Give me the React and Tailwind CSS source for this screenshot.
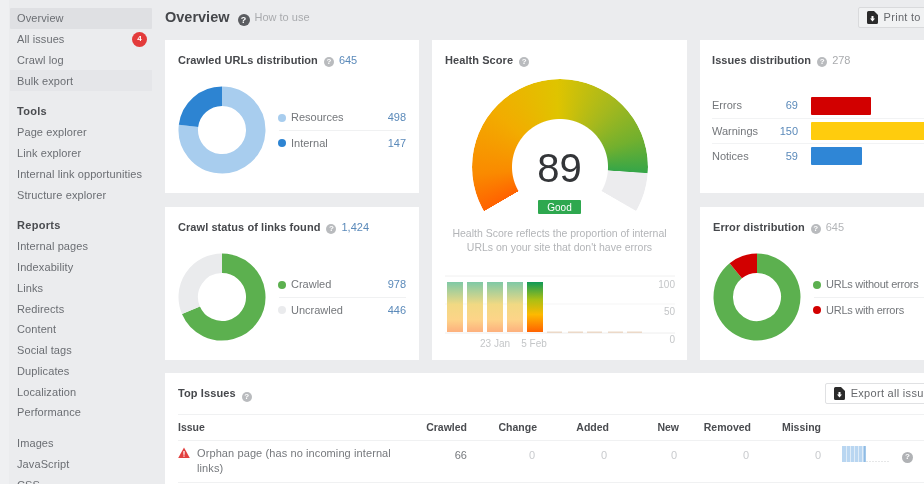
// App.jsx
import React from 'react';

const sans = { fontFamily: '"Liberation Sans", Arial, sans-serif' };

function NavItem({ label, className = '', children }) {
    return (
        <div className={`h-[20.8px] flex items-center justify-between pl-[7px] pr-[5px] text-[11px] tracking-[0.1px] text-[#6b6e73] ${className}`}>
            <span>{label}</span>
            {children}
        </div>
    );
}

function NavTitle({ label }) {
    return <div className="h-[20.8px] flex items-center pl-[7px] text-[11px] font-bold tracking-[0.3px] text-[#4a4c50]">{label}</div>;
}

function Help({ dark }) {
    return (
        <span className={`inline-flex items-center justify-center rounded-full font-bold text-white shrink-0 ${dark ? 'w-[12px] h-[12px] text-[9px] bg-[#5a5c60]' : 'w-[10px] h-[10px] text-[8px] bg-[#b9bbbe]'}`}>?</span>
    );
}

function CardTitle({ title, count, countClass = 'text-[#5b8aba]' }) {
    return (
        <div className="flex items-center h-[14px] text-[11px]">
            <span className="font-bold tracking-[0.07px] text-[#46484c]">{title}</span>
            <span className="ml-[6px]"><Help /></span>
            {count && <span className={`ml-[5px] ${countClass}`}>{count}</span>}
        </div>
    );
}

function FileIcon() {
    return (
        <svg width="11" height="13" viewBox="0 0 11 13" className="shrink-0">
            <path d="M1.500 0H7l4 4v7.500A1.500 1.500 0 0 1 9.500 13h-8A1.500 1.500 0 0 1 0 11.500v-10A1.500 1.500 0 0 1 1.500 0z" fill="#2b2b2b" />
            <path d="M4.500 5h2v2.500H8L5.500 10.500 3 7.500h1.500z" fill="#fff" />
        </svg>
    );
}

function Donut({ segments }) {
    // segments: [color, fromDeg, toDeg], clockwise from 12 o'clock
    const r = 33.75;
    const pt = (deg) => {
        const a = (deg - 90) * Math.PI / 180;
        return `${44 + r * Math.cos(a)} ${44 + r * Math.sin(a)}`;
    };
    return (
        <svg width="88" height="88" viewBox="0 0 88 88" className="shrink-0">
            {segments.map(([color, from, to]) => (
                <path key={color} d={`M${pt(from)} A${r} ${r} 0 ${to - from > 180 ? 1 : 0} 1 ${pt(to)}`} fill="none" stroke={color} strokeWidth="19.5" />
            ))}
        </svg>
    );
}

function Legend({ rows, labelClass = '' }) {
    return (
        <div className="w-[127px] ml-[13px] text-[11px]">
            {rows.map((row, i) => (
                <div key={row.label} className={`h-[25px] flex items-center ${i > 0 ? 'border-t border-[#f0f1f2]' : ''}`}>
                    <span className={`w-[8px] h-[8px] rounded-full ml-[-1px] mr-[5px] shrink-0 ${row.dot}`} />
                    <span className={`text-[#74777b] whitespace-nowrap ${labelClass}`}>{row.label}</span>
                    {row.value && <span className="ml-auto text-[#5b8aba]">{row.value}</span>}
                </div>
            ))}
        </div>
    );
}

function HistoryChart() {
    const bars = [447, 467, 487, 507];
    const small = [547, 568, 587, 608, 627];
    return (
        <svg width="240" height="76" viewBox="440 272 240 76" className="block" style={sans}>
            <defs>
                <linearGradient id="paleBar" x1="0" y1="0" x2="0" y2="1">
                    <stop offset="0" stopColor="#7fc9a6" />
                    <stop offset="0.45" stopColor="#f1d983" />
                    <stop offset="0.75" stopColor="#fdd488" />
                    <stop offset="1" stopColor="#fdb07d" />
                </linearGradient>
                <linearGradient id="fullBar" x1="0" y1="0" x2="0" y2="1">
                    <stop offset="0" stopColor="#0f9a58" />
                    <stop offset="0.35" stopColor="#a9bf14" />
                    <stop offset="0.65" stopColor="#fdb900" />
                    <stop offset="1" stopColor="#ff6200" />
                </linearGradient>
            </defs>
            <line x1="445" x2="675" y1="276" y2="276" stroke="#f0f0f0" />
            <line x1="445" x2="675" y1="304" y2="304" stroke="#f5f5f5" />
            <line x1="445" x2="675" y1="333" y2="333" stroke="#eeeeee" />
            {bars.map((x) => <rect key={x} x={x} y="282" width="16" height="50" fill="url(#paleBar)" />)}
            <rect x="527" y="282" width="16" height="50" fill="url(#fullBar)" />
            {small.map((x) => <rect key={x} x={x} y="331.5" width="15" height="1.5" fill="#ecd9c8" />)}
            <g fontSize="10" fill="#c4c6c8">
                <text x="675" y="288" textAnchor="end">100</text>
                <text x="675" y="315" textAnchor="end">50</text>
                <text x="675" y="343" textAnchor="end">0</text>
                <text x="495" y="347" textAnchor="middle">23 Jan</text>
                <text x="534" y="347" textAnchor="middle">5 Feb</text>
            </g>
        </svg>
    );
}

const cell = 'text-right';
const tableCols = 'grid-cols-[229px_60px_70px_72px_70px_72px_70px_100px]';

function App() {
    return (
        <div className="w-screen h-screen overflow-hidden flex bg-[#ebecee] blur-[0.5px]" style={sans}>
            <div className="w-[9px] shrink-0 bg-[#eff0f2]" />
            <aside className="w-[156px] shrink-0 pt-[8px] pl-[1px] pr-[13px]">
                <NavItem label="Overview" className="bg-[#dfe0e3] rounded-[1px]" />
                <NavItem label="All issues">
                    <span className="w-[15px] h-[15px] rounded-full bg-[#e33b3b] text-white text-[8px] font-bold flex items-center justify-center">4</span>
                </NavItem>
                <NavItem label="Crawl log" />
                <NavItem label="Bulk export" className="bg-[#e5e6e9]" />
                <div className="h-[10px]" />
                <NavTitle label="Tools" />
                <NavItem label="Page explorer" />
                <NavItem label="Link explorer" />
                <NavItem label="Internal link opportunities" />
                <NavItem label="Structure explorer" />
                <div className="h-[10px]" />
                <NavTitle label="Reports" />
                <NavItem label="Internal pages" />
                <NavItem label="Indexability" />
                <NavItem label="Links" />
                <NavItem label="Redirects" />
                <NavItem label="Content" />
                <NavItem label="Social tags" />
                <NavItem label="Duplicates" />
                <NavItem label="Localization" />
                <NavItem label="Performance" />
                <div className="h-[10px]" />
                <NavItem label="Images" />
                <NavItem label="JavaScript" />
                <NavItem label="CSS" />
            </aside>

            <main className="w-[860px] shrink-0">
                <header className="h-[40px] flex items-center pb-[5px]">
                    <h1 className="text-[14.5px] font-bold text-[#45474b]">Overview</h1>
                    <span className="ml-[8px]"><Help dark /></span>
                    <span className="ml-[5px] text-[11px] text-[#a9abae]">How to use</span>
                    <button className="ml-[548px] h-[21px] pl-[8px] pr-[10px] flex items-center gap-[6px] bg-[#f1f2f3] border border-[#d9dadc] rounded-[2px] text-[11px] tracking-[0.3px] text-[#66686c] whitespace-nowrap">
                        <FileIcon />
                        Print to PDF
                    </button>
                </header>

                <div className="grid grid-cols-[254px_255px_320px] grid-rows-[153px_153px] gap-x-[13px] gap-y-[14px]">
                    <section className="bg-white pt-[13px] px-[13px]">
                        <CardTitle title="Crawled URLs distribution" count="645" />
                        <div className="flex items-center mt-[19px]">
                            <Donut segments={[['#a8cdee', 0, 277], ['#2d84d2', 277, 360]]} />
                            <Legend rows={[
                                { label: 'Resources', value: '498', dot: 'bg-[#a8cdee]' },
                                { label: 'Internal', value: '147', dot: 'bg-[#2d84d2]' },
                            ]} />
                        </div>
                    </section>

                    <section className="bg-white row-span-2 pt-[13px] flex flex-col items-center">
                        <div className="self-start pl-[13px]"><CardTitle title="Health Score" /></div>
                        <div className="relative mt-[12px] w-[176px] h-[136px] overflow-hidden">
                            {/* gauge ring: 240deg sweep, coloured to 89% */}
                            <div className="w-[176px] h-[176px] rounded-full bg-[conic-gradient(from_240deg,#ff6200_0deg,#fa8a00_25deg,#f2ac00_70deg,#dfc400_118deg,#a4b81e_160deg,#72b02e_190deg,#36a648_213.7deg,#ececee_214.3deg,#ececee_239.7deg,#ffffff_240.3deg,#ffffff_359.7deg,#ff6200_360deg)] [mask:radial-gradient(circle,transparent_47.5px,#000_48.5px)]" />
                            <div className="absolute left-0 right-0 top-[70px] flex flex-col items-center">
                                <span className="text-[40px] leading-[38px] text-[#333538]">89</span>
                                <span className="mt-[13px] w-[43px] h-[14px] rounded-[1px] bg-[#2ea84f] text-white text-[10px] flex items-center justify-center">Good</span>
                            </div>
                        </div>
                        <p className="mt-[11px] w-[230px] text-center text-[10.5px] leading-[14px] text-[#b3b5b8]">
                            Health Score reflects the proportion of internal URLs on your site that don't have errors
                        </p>
                        <div className="mt-[18px]"><HistoryChart /></div>
                    </section>

                    <section className="bg-white pt-[13px] px-[12px]">
                        <CardTitle title="Issues distribution" count="278" countClass="text-[#a9abae]" />
                        <div className="mt-[26px] text-[11px]">
                            {[
                                ['Errors', '69', 'w-[60px] bg-[#d20000]', ''],
                                ['Warnings', '150', 'w-[220px] bg-[#ffcc0d]', 'border-t border-[#f2f3f4]'],
                                ['Notices', '59', 'w-[51px] bg-[#2f86d6]', 'border-t border-[#f2f3f4]'],
                            ].map(([label, value, bar, line]) => (
                                <div key={label} className={`h-[25px] flex items-center ${line}`}>
                                    <span className="w-[60px] shrink-0 text-[#74777b]">{label}</span>
                                    <span className="w-[26px] shrink-0 text-right text-[#5b8aba]">{value}</span>
                                    <span className={`ml-[13px] h-[18px] shrink-0 rounded-[1px] ${bar}`} />
                                </div>
                            ))}
                        </div>
                    </section>

                    <section className="bg-white pt-[13px] px-[13px] col-start-1">
                        <CardTitle title="Crawl status of links found" count="1,424" />
                        <div className="flex items-center mt-[19px]">
                            <Donut segments={[['#5cb04f', 0, 247], ['#eaebed', 247, 360]]} />
                            <Legend rows={[
                                { label: 'Crawled', value: '978', dot: 'bg-[#5cb04f]' },
                                { label: 'Uncrawled', value: '446', dot: 'bg-[#eaebed]' },
                            ]} />
                        </div>
                    </section>

                    <section className="bg-white pt-[13px] px-[13px] col-start-3">
                        <CardTitle title="Error distribution" count="645" countClass="text-[#b3b5b8]" />
                        <div className="flex items-center mt-[19px]">
                            <Donut segments={[['#5cb04f', 0, 321], ['#d20000', 321, 360]]} />
                            <Legend labelClass="tracking-[-0.25px]" rows={[
                                { label: 'URLs without errors', dot: 'bg-[#5cb04f]' },
                                { label: 'URLs with errors', dot: 'bg-[#d20000]' },
                            ]} />
                        </div>
                    </section>
                </div>

                <section className="bg-white mt-[13px] h-[200px]">
                    <div className="h-[41px] flex items-center px-[13px]">
                        <span className="text-[11px] font-bold tracking-[0.1px] text-[#46484c]">Top Issues</span>
                        <span className="ml-[6px]"><Help /></span>
                        <button className="ml-[573px] h-[21px] pl-[8px] pr-[10px] flex items-center gap-[6px] bg-white border border-[#e0e1e3] rounded-[2px] text-[11px] tracking-[0.3px] text-[#66686c] whitespace-nowrap">
                            <FileIcon />
                            Export all issues
                        </button>
                    </div>
                    <div className={`ml-[13px] grid ${tableCols} h-[27px] items-center border-t border-b border-[#f0f1f2] text-[10.5px] font-bold text-[#4a4c50]`}>
                        <span>Issue</span>
                        <span className={cell}>Crawled</span>
                        <span className={cell}>Change</span>
                        <span className={cell}>Added</span>
                        <span className={cell}>New</span>
                        <span className={cell}>Removed</span>
                        <span className={cell}>Missing</span>
                        <span />
                    </div>
                    <div className={`ml-[13px] grid ${tableCols} h-[42px] border-b border-[#f0f1f2] text-[11px] text-[#c9cbce]`}>
                        <div className="flex pt-[5px]">
                            <svg width="12" height="11" viewBox="0 0 12 11" className="shrink-0 mt-[1px]">
                                <path d="M6 0.5L11.8 11H0.2z" fill="#e2403f" />
                                <rect x="5.4" y="4" width="1.2" height="3.8" fill="#fff" />
                                <rect x="5.4" y="8.5" width="1.2" height="1.2" fill="#fff" />
                            </svg>
                            <span className="ml-[7px] w-[205px] leading-[15px] tracking-[0.1px] text-[#76797d]">Orphan page (has no incoming internal links)</span>
                        </div>
                        <span className={`${cell} pt-[6px] text-[#76797d]`}>66</span>
                        <span className={`${cell} pt-[6px] pr-[2px]`}>0</span>
                        <span className={`${cell} pt-[6px] pr-[2px]`}>0</span>
                        <span className={`${cell} pt-[6px] pr-[2px]`}>0</span>
                        <span className={`${cell} pt-[6px] pr-[2px]`}>0</span>
                        <span className={`${cell} pt-[6px]`}>0</span>
                        <div className="flex pt-[5px] pl-[21px]">
                            <svg width="47" height="17" viewBox="0 0 47 17" className="shrink-0">
                                <rect x="0" y="0" width="24" height="16" fill="#b9d6f1" />
                                {[4, 8, 12, 16, 20].map((x) => <rect key={x} x={x} y="0" width="1" height="16" fill="#dfecf8" />)}
                                <rect x="22" y="0" width="1.5" height="16" fill="#8fbbe4" />
                                <line x1="24" x2="47" y1="15.5" y2="15.5" stroke="#e6e7e8" strokeDasharray="2 1" />
                            </svg>
                            <span className="ml-[13px] mt-[1px]">
                                <span className="inline-flex items-center justify-center rounded-full font-bold text-white w-[11px] h-[11px] text-[8px] bg-[#b0b2b5]">?</span>
                            </span>
                        </div>
                    </div>
                </section>
            </main>
        </div>
    );
}

export default App;
